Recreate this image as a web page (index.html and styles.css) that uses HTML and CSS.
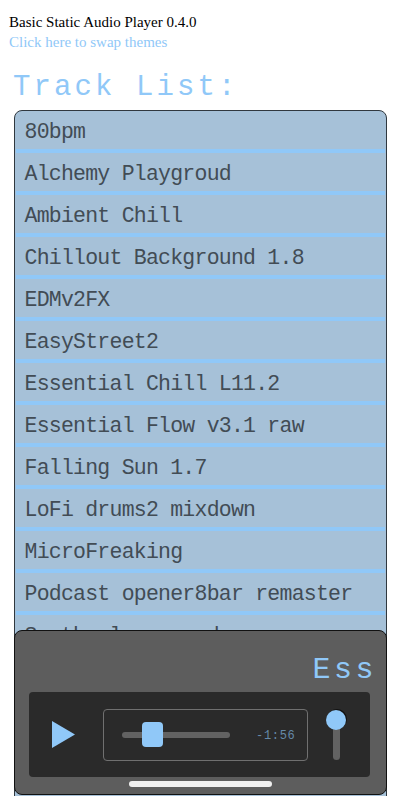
FILE: index.html
```html
<!DOCTYPE html>
<html lang="en">
<head>
<meta charset="utf-8">
<title>Basic Static Audio Player</title>
<link rel="stylesheet" href="styles.css">
</head>
<body>
<header class="intro">
  <div>Basic Static Audio Player 0.4.0</div>
  <a class="theme-link">Click here to swap themes</a>
</header>
<h1 class="heading">Track List:</h1>
<ul class="tracks">
  <li>80bpm</li>
  <li>Alchemy Playgroud</li>
  <li>Ambient Chill</li>
  <li>Chillout Background 1.8</li>
  <li>EDMv2FX</li>
  <li>EasyStreet2</li>
  <li>Essential Chill L11.2</li>
  <li>Essential Flow v3.1 raw</li>
  <li>Falling Sun 1.7</li>
  <li>LoFi drums2 mixdown</li>
  <li>MicroFreaking</li>
  <li>Podcast opener8bar remaster</li>
  <li>Synth plus sound</li>
</ul>
<section class="player">
  <div class="marquee"><span>Ess</span></div>
  <div class="controls">
    <svg class="play" viewBox="0 0 23 27"><path d="M0 0L23 13.5L0 27Z"/></svg>
    <div class="seek">
      <div class="seek-track"><div class="seek-thumb"></div></div>
      <span class="time">-1:56</span>
    </div>
    <div class="volume"><div class="volume-knob"></div></div>
  </div>
</section>
<div class="home-bar"></div>
</body>
</html>
```
FILE: styles.css
```css
* { box-sizing: border-box; }
html, body { height: 796px; overflow: hidden; }
body { margin: 0; background: #fff; font-family: "Liberation Serif", serif; }
.intro { padding: 12px 9px 0; font-size: 15px; line-height: 20px; color: #000; }
.theme-link { display: block; color: #90c8f8; }
.heading {
  margin: 16px 13px 0;
  height: 42px;
  font: 400 29px/40px "Liberation Mono", monospace;
  letter-spacing: 3.1px;
  color: #90c8f8;
}
.tracks {
  margin: 0 13px 0 13.5px;
  padding: 0;
  height: 700px;
  list-style: none;
  background: #a6c1d8;
  border: 1px solid #30383f;
  border-radius: 8px 8px 0 0;
}
.tracks li {
  height: 42px;
  margin: 0 1px;
  padding-left: 9px;
  border-bottom: 4px solid #90c8f8;
  font: 400 21.5px/42px "Liberation Mono", monospace;
  letter-spacing: -0.76px;
  color: #424c55;
}
.player {
  position: fixed;
  left: 13.5px;
  right: 13px;
  top: 630px;
  height: 165px;
  padding: 18px 14px 0;
  background: #5d5d5d;
  border: 1px solid #111;
  border-radius: 8px;
}
.marquee {
  height: 43px;
  padding-left: 284px;
  white-space: nowrap;
  font: 400 30px/42px "Liberation Mono", monospace;
  letter-spacing: 3.5px;
  color: #90c8f8;
}
.controls {
  display: flex;
  align-items: center;
  width: 341px;
  height: 85px;
  padding-left: 23.5px;
  background: #2a2a2a;
  border-radius: 4px;
}
.play { width: 23px; height: 27px; fill: #90c8f8; }
.seek {
  display: flex;
  align-items: center;
  width: 205px;
  height: 52px;
  margin-left: 28px;
  padding-left: 17.5px;
  border: 1px solid #707070;
  border-radius: 4px;
}
.seek-track { width: 108px; height: 6px; background: #626262; border-radius: 3px; }
.seek-thumb {
  width: 21px;
  height: 25px;
  margin: -10px 0 0 20px;
  background: #90c8f8;
  border-radius: 4px;
}
.time {
  margin: 3px 0 0 26.5px;
  font: 400 12px/14px "Liberation Mono", monospace;
  letter-spacing: 0.7px;
  color: #6589a8;
}
.volume {
  width: 7px;
  height: 50px;
  margin: 1px 0 0 25px;
  background: #626262;
  border-radius: 4px;
}
.volume-knob {
  width: 20px;
  height: 20px;
  margin-left: -7px;
  background: #90c8f8;
  border-radius: 50%;
  box-shadow: 1px -1px 0 #111;
}
.home-bar {
  position: fixed;
  left: 129px;
  top: 781px;
  width: 143px;
  height: 6px;
  background: #f0f0f0;
  border-radius: 3px;
}
```
